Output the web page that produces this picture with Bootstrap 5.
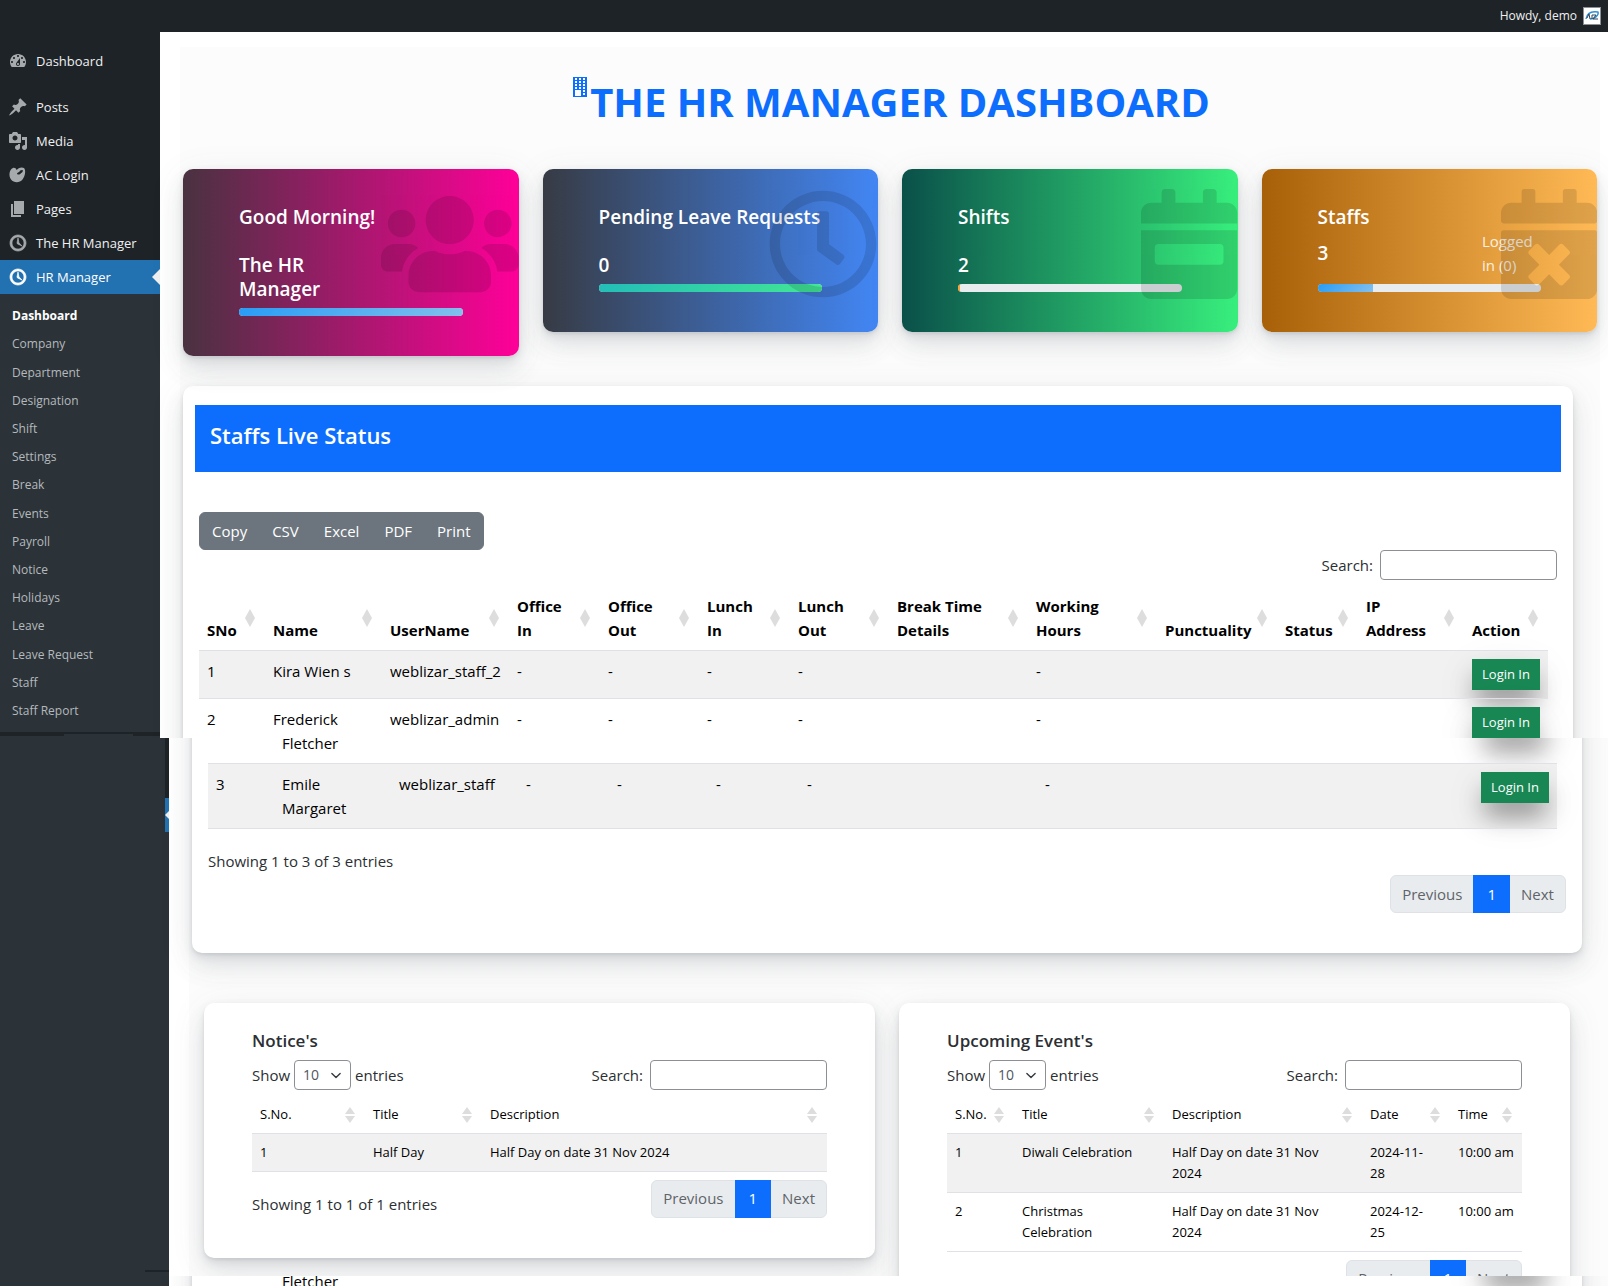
<!DOCTYPE html>
<html lang="en">
<head>
<meta charset="utf-8">
<meta name="viewport" content="width=device-width, initial-scale=1">
<title>The HR Manager Dashboard</title>
<link href="https://cdn.jsdelivr.net/npm/bootstrap@5.3.0/dist/css/bootstrap.min.css" rel="stylesheet">
<style>
body{font-family:"Open Sans","Noto Sans",sans-serif;font-size:15px;line-height:24px;color:#2b2f33;background:#fff;overflow:hidden}
a{text-decoration:none}
.adminbar{height:32px;background:#1d2327;color:#f0f0f1;font-size:12px;padding-right:7px;gap:6px}
.adminbar a{color:#f0f0f1}
.avatar{width:18px;height:18px;border:1px solid #8c8f94;background:#fff}
/* page bands: each one clips its own shadows */
.band{overflow:hidden}
.band-top{height:706px}
.band-mid{height:538px}
.band-end{height:10px}
.side{flex:0 0 160px;background:#1d2327;font-size:13px}
.side-wide{flex:0 0 169px;background:#2c3338}
.side .top-link{display:flex;align-items:center;height:34px;padding-left:8px;gap:8px;color:#f0f0f1;position:relative}
.side .top-link svg{width:20px;height:20px;fill:#a7aaad;flex:none}
.side .current{background:#2271b1;color:#fff}
.side .current svg{fill:#fff}
.side .current::after,.rail .rail-on::after{content:"";position:absolute;right:0;top:9px;border:8px solid transparent;border-left:0;border-right-color:#f0f0f1}
.submenu{background:#2c3338;height:438px;padding:8px 0 7px;font-size:12px}
.submenu a{color:#b4b9be;padding-left:12px;display:flex;align-items:center;height:100%}
.submenu a.on{color:#fff;font-weight:700}
.side-foot{background:#2c3338;width:69px;height:2px;margin:2px 0 0 64px}
.side-end{background:#2c3338;height:8px}
.rail{width:4px;height:94px;background:#1d2327}
.rail-on{height:34px;margin-top:60px;background:#2271b1;position:relative;overflow:hidden}
.rail .rail-on::after{right:-4px}
.side-rule{height:2px;width:24px;background:#1d2327;margin-bottom:4px}
.canvas{background:#fcfcfc;min-width:0}
.band-top .canvas{margin:15px 8px 0 20px;padding:0 3px}
.band-mid .canvas,.band-end .canvas{margin-left:20px;padding:0 0 0 3px}
.page-title{font-size:40px;line-height:48px;font-weight:700;color:#0d6efd;padding:31px 0 43px;margin:0}
.page-title svg{width:14px;height:20px;fill:#0d6efd;margin:-1px 3px 0 3px}
.lift{box-shadow:0 7px 35px rgba(90,97,105,.1),0 15px 22px rgba(90,97,105,.1),0 4px 8px rgba(90,97,105,.12),0 2px 3px rgba(90,97,105,.1)}
.stat{flex:1 1 0;border-radius:10px;color:#fff;padding:36px 56px 40px;position:relative;overflow:hidden}
.stat h2,.stat h3{font-size:19px;line-height:24px;font-weight:600;margin:0}
.stat h2{white-space:nowrap}
.stat h3{margin:24px 0 7px}
.stat .wash{position:absolute;right:0;top:20px;height:110px;fill:#000;opacity:.12}
.stat .duo{margin:0 0 7px;height:48px}
.stat .duo h3{margin:0}
.stat .duo span{width:59px;opacity:.85}
.stat .progress{height:8px;border-radius:4px;background:#e9ecef}
.s-cherry{background:linear-gradient(to right,#493240,#f09)}
.s-blue{background:linear-gradient(to right,#373b44,#4286f4)}
.s-green{background:linear-gradient(to right,#0a504a,#38ef7d)}
.s-orange{background:linear-gradient(to right,#a86008,#ffba56)}
.g-cyan{background:linear-gradient(135deg,#289cf5,#84c0ec)}
.g-green{background:linear-gradient(135deg,#23bdb8,#43e794)}
.g-orange{background:#f9a02e}
.sheet{background:#fff;border-radius:10px}
.live{padding:19px 12px 60px;margin:30px 24px 0 0}
.live-tail{margin:-50px 26px 0 0;padding:50px 16px 40px}
.live-head{background:#0d6efd;color:#fff;padding:18px 15px 25px}
.live-head h2{font-size:22px;line-height:24px;font-weight:600;margin:0}
.inset{padding:40px 4px 0}
.btn-group .btn{font-size:15px;padding:6px 12px;line-height:24px}
.find{gap:7px}
.find input{width:177px;height:30px;border:1px solid #8c8f94;border-radius:4px;padding:0 8px;background:#fff}
.grid{table-layout:fixed;margin:0;color:#000;--bs-table-color:#000;--bs-table-bg:transparent}
.grid>:not(caption)>*>*{padding:8px}
.grid .shade{--bs-table-bg:#f1f1f1}
.grid thead th{position:relative;vertical-align:bottom}
.grid .user{white-space:nowrap}
.grid thead th::before,.grid thead th::after{content:"";position:absolute;right:10px;border:5px solid transparent}
.grid thead th::before{bottom:50%;border-bottom:9px solid #ddd;border-top:0}
.grid thead th::after{top:50%;border-top:9px solid #ddd;border-bottom:0}
.main-grid{width:calc(100% - 9px)}
.band-top .main-grid{margin-top:6px}
.main-grid tr.one{height:48px}
.main-grid tr.one td,.main-grid tr.two td{padding-bottom:7px}
.main-grid tr.two{height:65px}
.main-grid tr.cont td{padding:0 8px 15px;line-height:10px}
.btn-log{background:#198754;color:#fff;border:0;border-radius:0;font-size:13px;line-height:21px;padding:5px 0;width:68px;display:block;box-shadow:0 16px 24px -4px rgba(0,0,0,.38),0 12px 40px rgba(0,0,0,.1)}
.btn-log:hover{background:#157347;color:#fff}
.log-shade{width:68px;height:31px;margin-top:-31px}
.pagination{margin:0}
.pagination .page-link{font-size:15px;line-height:24px;padding:6px 11px}
.pagination .disabled .page-link{color:#5f6469;background:#e9ecef}
.pagination .page-item.active .page-link{padding:6px 13px}
.box .pagination .page-link,.box .pagination .page-item.active .page-link{padding-top:5px;padding-bottom:7px}
.live-pages{margin-top:2px}
.small-cards{gap:24px;padding:50px 38px 0 12px}
.box{flex:1 1 0;padding:26px 48px 40px}
.box h3{font-size:17px;line-height:24px;font-weight:600;margin:0 0 7px}
.box .form-select{width:57px;height:30px;font-size:14px;line-height:20px;padding:4px 8px;border:1px solid #8c8f94;border-radius:4px;color:#50575e;background-position:right 7px center;background-size:14px 11px}
.box .grid{font-size:13px;line-height:21px;margin-top:6px}
.box .grid th{font-weight:400}
.box .grid tr{height:37px}
.box .grid thead th{border-bottom-width:1px}
.box .grid thead th::before{border-bottom-width:7px;margin-bottom:1px}
.box .grid thead th::after{border-top-width:7px;margin-top:1px}
</style>
</head>
<body>
<header class="adminbar d-flex align-items-center justify-content-end">
  <a href="#">Howdy, demo</a>
  <svg class="avatar" viewBox="0 0 16 16"><path d="M2 11c1-6 6-8 12-7 1 3-3 7-8 7" fill="none" stroke="#2b8fd6" stroke-width="1.4"/><path d="M3 10l2-4 1 5M8 7v4M8 7h4l-3 4h5" fill="none" stroke="#345" stroke-width="1"/></svg>
</header>

<div class="band band-top d-flex">
  <nav class="side pt-2" aria-label="Admin menu">
    <div class="pt-1">
    <a class="top-link" href="#"><svg viewBox="0 0 20 20"><path fill-rule="evenodd" d="M3.76 16h12.48c1.1-1.37 1.76-3.11 1.76-5 0-4.42-3.58-8-8-8s-8 3.58-8 8c0 1.89.66 3.63 1.76 5zM10 4c.55 0 1 .45 1 1s-.45 1-1 1-1-.45-1-1 .45-1 1-1zM6 6c.55 0 1 .45 1 1s-.45 1-1 1-1-.45-1-1 .45-1 1-1zm8 0c.55 0 1 .45 1 1s-.45 1-1 1-1-.45-1-1 .45-1 1-1zm-5.37 5.55L12 7v6c0 1.1-.9 2-2 2s-2-.9-2-2c0-.57.24-1.08.63-1.45zM4 10c.55 0 1 .45 1 1s-.45 1-1 1-1-.45-1-1 .45-1 1-1zm12 0c.55 0 1 .45 1 1s-.45 1-1 1-1-.45-1-1 .45-1 1-1zm-5 3c0-.55-.45-1-1-1s-1 .45-1 1 .45 1 1 1 1-.45 1-1z"/></svg>Dashboard</a>
    </div>
    <div class="pt-2"><div class="mt-1">
    <a class="top-link" href="#"><svg viewBox="0 0 20 20"><path d="M10.44 3.02l1.82-1.82 6.36 6.35-1.83 1.82c-1.05-.68-2.48-.57-3.41.36l-.75.75c-.92.93-1.04 2.35-.35 3.41l-1.83 1.82-2.41-2.41-2.8 2.79c-.42.42-3.38 2.71-3.8 2.29s1.86-3.39 2.28-3.81l2.79-2.79L4.1 9.36l1.83-1.82c1.05.69 2.48.57 3.4-.36l.75-.75c.93-.92 1.05-2.35.36-3.41z"/></svg>Posts</a>
    <a class="top-link" href="#"><svg viewBox="0 0 20 20"><path fill-rule="evenodd" d="M13 11V4c0-.55-.45-1-1-1h-1.67L9 1H5L3.67 3H2c-.55 0-1 .45-1 1v7c0 .55.45 1 1 1h10c.55 0 1-.45 1-1zM7 4.5c1.38 0 2.5 1.12 2.5 2.5S8.38 9.5 7 9.5 4.5 8.38 4.5 7 5.62 4.5 7 4.5zM14 6h5v10.5c0 1.38-1.12 2.5-2.5 2.5S14 17.88 14 16.5s1.12-2.5 2.5-2.5c.17 0 .34.02.5.05V9h-3V6zm-4 8.05V13h2v3.5c0 1.38-1.12 2.5-2.5 2.5S7 17.88 7 16.5 8.12 14 9.5 14c.17 0 .34.02.5.05z"/></svg>Media</a>
    <a class="top-link" href="#"><svg viewBox="0 0 20 20"><path fill-rule="evenodd" d="M5 3c1.500-.6 3 .2 3.500 2C10 3.500 13 1.500 16 3c2 2 1.400 8-1.500 11.500C11.500 18 6 18 3 14.500.5 11 1 4.500 5 3zM9 9c1.500 1 3.500.5 4-1 1.200-.4 2-1.500 1.800-2.800C13 4.800 11.500 6 11.300 7 10 7 9 8 9 9z"/></svg>AC Login</a>
    <a class="top-link" href="#"><svg viewBox="0 0 20 20"><path d="M6 15V2h10v13H6zm-1 1h8v2H3V5h2v11z"/></svg>Pages</a>
    <a class="top-link" href="#"><svg viewBox="0 0 20 20"><path d="M10 2c4.420 0 8 3.580 8 8s-3.580 8-8 8-8-3.580-8-8 3.580-8 8-8zm0 14c3.310 0 6-2.690 6-6s-2.690-6-6-6-6 2.690-6 6 2.690 6 6 6zm-.71-5.290c.07.05.14.1.23.15l-.02.02L14 13l-3.030-3.190L10 5l-.97 4.810h.01c0 .02-.01.05-.02.09S9 9.970 9 10c0 .28.1.52.29.71z" stroke="#a7aaad" stroke-width=".7"/></svg>The HR Manager</a>
    <a class="top-link current" href="#"><svg viewBox="0 0 20 20"><path d="M10 2c4.420 0 8 3.580 8 8s-3.580 8-8 8-8-3.580-8-8 3.580-8 8-8zm0 14c3.310 0 6-2.690 6-6s-2.690-6-6-6-6 2.690-6 6 2.690 6 6 6zm-.71-5.290c.07.05.14.1.23.15l-.02.02L14 13l-3.030-3.190L10 5l-.97 4.810h.01c0 .02-.01.05-.02.09S9 9.970 9 10c0 .28.1.52.29.71z" stroke="#fff" stroke-width=".7"/></svg>HR Manager</a>
    </div></div>
    <ul class="submenu list-unstyled d-flex flex-column mb-0">
      <li class="flex-fill"><a class="on" href="#">Dashboard</a></li>
      <li class="flex-fill"><a href="#">Company</a></li>
      <li class="flex-fill"><a href="#">Department</a></li>
      <li class="flex-fill"><a href="#">Designation</a></li>
      <li class="flex-fill"><a href="#">Shift</a></li>
      <li class="flex-fill"><a href="#">Settings</a></li>
      <li class="flex-fill"><a href="#">Break</a></li>
      <li class="flex-fill"><a href="#">Events</a></li>
      <li class="flex-fill"><a href="#">Payroll</a></li>
      <li class="flex-fill"><a href="#">Notice</a></li>
      <li class="flex-fill"><a href="#">Holidays</a></li>
      <li class="flex-fill"><a href="#">Leave</a></li>
      <li class="flex-fill"><a href="#">Leave Request</a></li>
      <li class="flex-fill"><a href="#">Staff</a></li>
      <li class="flex-fill"><a href="#">Staff Report</a></li>
    </ul>
    <div class="side-foot"></div>
    <div class="side-end"></div>
  </nav>

  <main class="canvas flex-fill">
    <h1 class="page-title d-flex justify-content-center"><svg viewBox="0 0 14 20"><path fill-rule="evenodd" d="M0 0h14v20H0zM2 1v2h2V1zm4 0v2h2V1zm4 0v2h2V1zM2 4v2h2V4zm4 0v2h2V4zm4 0v2h2V4zM2 7v2h2V7zm4 0v2h2V7zm4 0v2h2V7zM2 10v2h2v-2zm4 0v2h2v-2zm4 0v2h2v-2zM2 13v6h6v-6zm8 0v2h2v-2zm0 3v2h2v-2z"/></svg>THE HR MANAGER DASHBOARD</h1>

    <div class="d-flex gap-4 align-items-start">
      <section class="lift stat s-cherry">
        <h2>Good Morning!</h2>
        <h3>The HR<br>Manager</h3>
        <div class="progress"><div class="progress-bar g-cyan" style="width:100%"></div></div>
        <svg class="wash" viewBox="0 0 640 512"><path d="M96 224c35.300 0 64-28.700 64-64s-28.700-64-64-64-64 28.700-64 64 28.700 64 64 64zm448 0c35.300 0 64-28.700 64-64s-28.700-64-64-64-64 28.700-64 64 28.700 64 64 64zm32 32h-64c-17.600 0-33.500 7.100-45.100 18.600 40.300 22.100 68.900 62 75.100 109.400h66c17.700 0 32-14.300 32-32v-32c0-35.300-28.700-64-64-64zm-256 0c61.900 0 112-50.100 112-112S381.900 32 320 32 208 82.100 208 144s50.100 112 112 112zm76.800 32h-8.300c-20.800 10-43.900 16-68.500 16s-47.600-6-68.500-16h-8.300C179.600 288 128 339.600 128 403.200V432c0 26.500 21.500 48 48 48h288c26.500 0 48-21.500 48-48v-28.800c0-63.600-51.600-115.200-115.200-115.200zm-223.700-13.400C161.500 263.100 145.600 256 128 256H64c-35.300 0-64 28.700-64 64v32c0 17.700 14.300 32 32 32h65.900c6.300-47.400 34.900-87.300 75.200-109.400z"/></svg>
      </section>
      <section class="lift stat s-blue">
        <h2>Pending Leave Requests</h2>
        <h3>0</h3>
        <div class="progress"><div class="progress-bar g-green" style="width:100%"></div></div>
        <svg class="wash" viewBox="0 0 512 512"><path d="M256 8C119 8 8 119 8 256s111 248 248 248 248-111 248-248S393 8 256 8zm0 448c-110.500 0-200-89.500-200-200S145.500 56 256 56s200 89.500 200 200-89.500 200-200 200zm61.800-104.400l-84.900-61.700c-3.100-2.300-4.900-5.900-4.900-9.700V116c0-6.600 5.400-12 12-12h32c6.600 0 12 5.400 12 12v141.700l66.800 48.600c5.400 3.900 6.500 11.400 2.600 16.800L334.600 349c-3.900 5.300-11.400 6.500-16.800 2.600z"/></svg>
      </section>
      <section class="lift stat s-green">
        <h2>Shifts</h2>
        <h3>2</h3>
        <div class="progress"><div class="progress-bar g-orange" style="width:1%"></div></div>
        <svg class="wash" viewBox="0 0 448 512"><path fill-rule="evenodd" d="M0 464c0 26.500 21.500 48 48 48h352c26.500 0 48-21.500 48-48V192H0v272zm64-192c0-8.800 7.200-16 16-16h288c8.800 0 16 7.200 16 16v64c0 8.800-7.200 16-16 16H80c-8.800 0-16-7.200-16-16v-64zM400 64h-48V16c0-8.800-7.200-16-16-16h-32c-8.800 0-16 7.200-16 16v48H160V16c0-8.800-7.200-16-16-16h-32c-8.800 0-16 7.200-16 16v48H48C21.500 64 0 85.500 0 112v48h448v-48c0-26.500-21.500-48-48-48z"/></svg>
      </section>
      <section class="lift stat s-orange">
        <h2>Staffs</h2>
        <div class="duo d-flex justify-content-between"><h3 class="pt-2"><span class="d-block opacity-100 mt-1">3</span></h3><span>Logged in&nbsp;(0)</span></div>
        <div class="progress"><div class="progress-bar g-cyan" style="width:25%"></div></div>
        <svg class="wash" viewBox="0 0 448 512"><path d="M436 160H12c-6.600 0-12-5.400-12-12v-36c0-26.500 21.500-48 48-48h48V12c0-6.600 5.400-12 12-12h40c6.600 0 12 5.400 12 12v52h128V12c0-6.600 5.400-12 12-12h40c6.600 0 12 5.400 12 12v52h48c26.500 0 48 21.500 48 48v36c0 6.600-5.400 12-12 12zM12 192h424c6.600 0 12 5.400 12 12v260c0 26.500-21.500 48-48 48H48c-26.500 0-48-21.500-48-48V204c0-6.600 5.400-12 12-12zm257.300 160l48.100-48.100c4.700-4.700 4.700-12.300 0-17l-28.300-28.300c-4.700-4.700-12.300-4.700-17 0L224 306.700l-48.100-48.100c-4.700-4.700-12.300-4.700-17 0l-28.300 28.300c-4.700 4.700-4.700 12.300 0 17l48.100 48.100-48.100 48.100c-4.700 4.700-4.700 12.300 0 17l28.300 28.300c4.700 4.700 12.300 4.700 17 0l48.100-48.100 48.100 48.100c4.700 4.700 12.300 4.700 17 0l28.300-28.300c4.700-4.700 4.700-12.300 0-17L269.300 352z"/></svg>
      </section>
    </div>

    <section class="lift sheet live">
      <div class="live-head"><h2>Staffs Live Status</h2></div>
      <div class="inset">
        <div class="btn-group" role="group" aria-label="Export">
          <button type="button" class="btn btn-secondary">Copy</button>
          <button type="button" class="btn btn-secondary">CSV</button>
          <button type="button" class="btn btn-secondary">Excel</button>
          <button type="button" class="btn btn-secondary">PDF</button>
          <button type="button" class="btn btn-secondary">Print</button>
        </div>
        <div class="find d-flex justify-content-end align-items-center"><label for="q1">Search:</label><input id="q1" type="search"></div>
        <table class="table grid main-grid">
          <colgroup><col style="width:66px"><col style="width:117px"><col style="width:127px"><col style="width:91px"><col style="width:99px"><col style="width:91px"><col style="width:99px"><col style="width:139px"><col style="width:129px"><col style="width:120px"><col style="width:81px"><col style="width:106px"><col style="width:84px"></colgroup>
          <thead><tr><th>SNo</th><th>Name</th><th>UserName</th><th>Office<br>In</th><th>Office<br>Out</th><th>Lunch<br>In</th><th>Lunch<br>Out</th><th>Break Time<br>Details</th><th>Working<br>Hours</th><th>Punctuality</th><th>Status</th><th>IP<br>Address</th><th>Action</th></tr></thead>
          <tbody>
            <tr class="shade one"><td>1</td><td>Kira Wien s</td><td class="user">weblizar_staff_2</td><td>-</td><td>-</td><td>-</td><td>-</td><td></td><td>-</td><td></td><td></td><td></td><td><button type="button" class="btn btn-log">Login In</button></td></tr>
            <tr class="two"><td>2</td><td>Frederick</td><td class="user">weblizar_admin</td><td>-</td><td>-</td><td>-</td><td>-</td><td></td><td>-</td><td></td><td></td><td></td><td><button type="button" class="btn btn-log">Login In</button></td></tr>
          </tbody>
        </table>
      </div>
    </section>
  </main>
</div>

<div class="band band-mid d-flex">
  <div class="side-wide d-flex flex-column justify-content-between align-items-end">
    <div class="rail d-flex flex-column"><div class="rail-on"></div></div>
    <div class="side-rule"></div>
  </div>
  <div class="canvas flex-fill">
    <section class="lift sheet live-tail">
      <table class="table grid main-grid">
        <colgroup><col style="width:66px"><col style="width:117px"><col style="width:127px"><col style="width:91px"><col style="width:99px"><col style="width:91px"><col style="width:99px"><col style="width:139px"><col style="width:129px"><col style="width:120px"><col style="width:81px"><col style="width:106px"><col style="width:84px"></colgroup>
        <tbody>
          <tr class="cont"><td></td><td>Fletcher</td><td></td><td></td><td></td><td></td><td></td><td></td><td></td><td></td><td></td><td></td><td><div class="btn-log log-shade"></div></td></tr>
          <tr class="shade two"><td>3</td><td>Emile Margaret</td><td class="user">weblizar_staff</td><td>-</td><td>-</td><td>-</td><td>-</td><td></td><td>-</td><td></td><td></td><td></td><td><button type="button" class="btn btn-log">Login In</button></td></tr>
        </tbody>
      </table>
      <div class="pt-3"><div class="pt-1">Showing 1 to 3 of 3 entries</div></div>
      <nav class="live-pages d-flex justify-content-end" aria-label="Staff pages">
        <ul class="pagination"><li class="page-item disabled"><a class="page-link" href="#">Previous</a></li><li class="page-item active"><a class="page-link" href="#">1</a></li><li class="page-item disabled"><a class="page-link" href="#">Next</a></li></ul>
      </nav>
    </section>

    <div class="small-cards d-flex align-items-start">
      <section class="lift sheet box">
        <h3>Notice's</h3>
        <div class="d-flex justify-content-between align-items-center">
          <div class="d-flex align-items-center gap-1"><label for="n1">Show</label><select id="n1" class="form-select"><option>10</option></select><span>entries</span></div>
          <div class="find d-flex align-items-center"><label for="q2">Search:</label><input id="q2" type="search"></div>
        </div>
        <table class="table grid">
          <colgroup><col style="width:113px"><col style="width:117px"><col style="width:345px"></colgroup>
          <thead><tr><th>S.No.</th><th>Title</th><th>Description</th></tr></thead>
          <tbody><tr class="shade"><td>1</td><td>Half Day</td><td>Half Day on date 31 Nov 2024</td></tr></tbody>
        </table>
        <div class="d-flex justify-content-between pt-2">
          <div class="pt-2 mt-1"><div>Showing 1 to 1 of 1 entries</div></div>
          <ul class="pagination"><li class="page-item disabled"><a class="page-link" href="#">Previous</a></li><li class="page-item active"><a class="page-link" href="#">1</a></li><li class="page-item disabled"><a class="page-link" href="#">Next</a></li></ul>
        </div>
      </section>
      <section class="lift sheet box">
        <h3>Upcoming Event's</h3>
        <div class="d-flex justify-content-between align-items-center">
          <div class="d-flex align-items-center gap-1"><label for="n2">Show</label><select id="n2" class="form-select"><option>10</option></select><span>entries</span></div>
          <div class="find d-flex align-items-center"><label for="q3">Search:</label><input id="q3" type="search"></div>
        </div>
        <table class="table grid">
          <colgroup><col style="width:67px"><col style="width:150px"><col style="width:198px"><col style="width:88px"><col style="width:72px"></colgroup>
          <thead><tr><th>S.No.</th><th>Title</th><th>Description</th><th>Date</th><th>Time</th></tr></thead>
          <tbody>
            <tr class="shade"><td>1</td><td>Diwali Celebration</td><td>Half Day on date 31 Nov<br>2024</td><td>2024-11-<br>28</td><td class="user">10:00 am</td></tr>
            <tr><td>2</td><td>Christmas<br>Celebration</td><td>Half Day on date 31 Nov<br>2024</td><td>2024-12-<br>25</td><td class="user">10:00 am</td></tr>
          </tbody>
        </table>
        <div class="d-flex justify-content-end pt-2">
          <ul class="pagination"><li class="page-item disabled"><a class="page-link" href="#">Previous</a></li><li class="page-item active"><a class="page-link" href="#">1</a></li><li class="page-item disabled"><a class="page-link" href="#">Next</a></li></ul>
        </div>
      </section>
    </div>
  </div>
</div>

<div class="band band-end d-flex">
  <div class="side-wide"></div>
  <div class="canvas flex-fill">
    <section class="lift sheet live-tail">
      <table class="table grid main-grid">
        <colgroup><col style="width:66px"><col style="width:117px"><col style="width:1082px"><col style="width:84px"></colgroup>
        <tbody><tr class="cont"><td></td><td>Fletcher</td><td></td><td><div class="btn-log log-shade"></div></td></tr></tbody>
      </table>
    </section>
  </div>
</div>
<script src="https://cdn.jsdelivr.net/npm/bootstrap@5.3.0/dist/js/bootstrap.bundle.min.js"></script>
</body>
</html>
